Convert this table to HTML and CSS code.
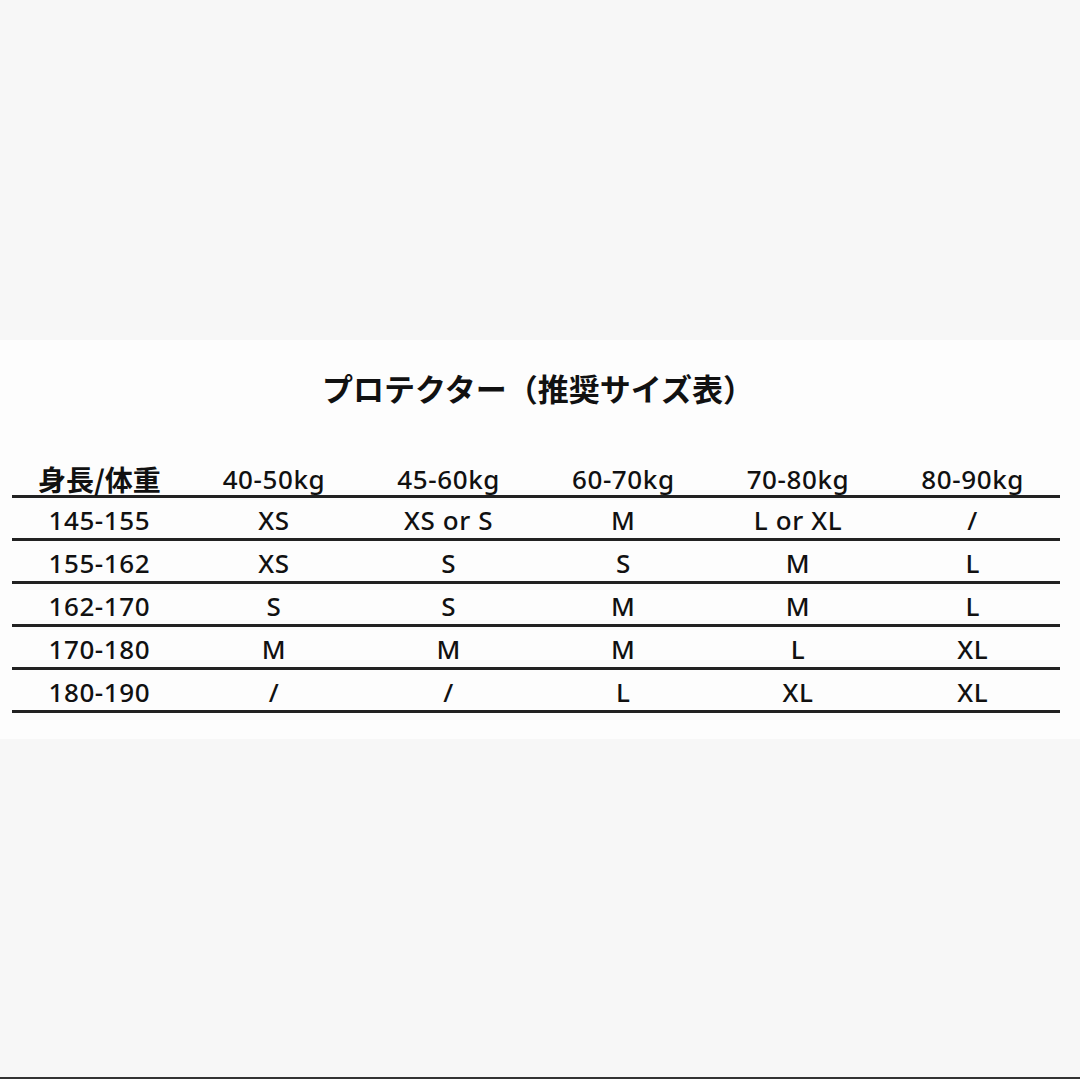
FILE: index.html
```html
<!DOCTYPE html>
<html lang="ja">
<head>
<meta charset="utf-8">
<link rel="stylesheet" href="styles.css">
</head>
<body>
<div class="page">
  <div class="top"></div>
  <div class="band">
    <h1 class="title">プロテクター（推奨サイズ表）</h1>
    <div class="table">
      <div class="row head">
        <div class="cell jp">身長/体重</div>
        <div class="cell">40-50kg</div>
        <div class="cell">45-60kg</div>
        <div class="cell">60-70kg</div>
        <div class="cell">70-80kg</div>
        <div class="cell">80-90kg</div>
      </div>
      <div class="row">
        <div class="cell">145-155</div>
        <div class="cell">XS</div>
        <div class="cell">XS or S</div>
        <div class="cell">M</div>
        <div class="cell">L or XL</div>
        <div class="cell">/</div>
      </div>
      <div class="row">
        <div class="cell">155-162</div>
        <div class="cell">XS</div>
        <div class="cell">S</div>
        <div class="cell">S</div>
        <div class="cell">M</div>
        <div class="cell">L</div>
      </div>
      <div class="row">
        <div class="cell">162-170</div>
        <div class="cell">S</div>
        <div class="cell">S</div>
        <div class="cell">M</div>
        <div class="cell">M</div>
        <div class="cell">L</div>
      </div>
      <div class="row">
        <div class="cell">170-180</div>
        <div class="cell">M</div>
        <div class="cell">M</div>
        <div class="cell">M</div>
        <div class="cell">L</div>
        <div class="cell">XL</div>
      </div>
      <div class="row">
        <div class="cell">180-190</div>
        <div class="cell">/</div>
        <div class="cell">/</div>
        <div class="cell">L</div>
        <div class="cell">XL</div>
        <div class="cell">XL</div>
      </div>
    </div>
  </div>
  <div class="bottom"></div>
</div>
</body>
</html>
```

FILE: styles.css
```css
html, body {
  margin: 0;
  padding: 0;
}
body {
  background: #f7f7f7;
  font-family: "Noto Sans", "Noto Sans CJK JP", sans-serif;
  color: #111;
}
.page {
  height: 1079px;
  display: flex;
  flex-direction: column;
}
.top {
  height: 340px;
  flex: none;
}
.band {
  background: #fdfdfd;
  padding: 28px 20px 26px 12px;
  flex: none;
}
.title {
  margin: 0;
  padding-left: 4px;
  text-align: center;
  font-family: "Noto Sans CJK JP", sans-serif;
  font-size: 31px;
  font-weight: 700;
  line-height: 40px;
}
.table {
  margin-top: 51px;
}
.row {
  display: grid;
  grid-template-columns: repeat(6, 1fr);
  height: 40px;
  align-items: center;
  border-bottom: 3px solid #222;
}
.row.head {
  height: 36px;
}
.cell {
  text-align: center;
  font-size: 26px;
  font-weight: 500;
  letter-spacing: 0.6px;
  line-height: 40px;
  padding-top: 2px;
}
.row.head .cell {
  padding-top: 0;
}
.cell.jp {
  font-family: "Noto Sans CJK JP", sans-serif;
  font-weight: 700;
  font-size: 28px;
  letter-spacing: 0;
}
.bottom {
  flex: 1;
  border-bottom: 2px solid #333;
}
```
